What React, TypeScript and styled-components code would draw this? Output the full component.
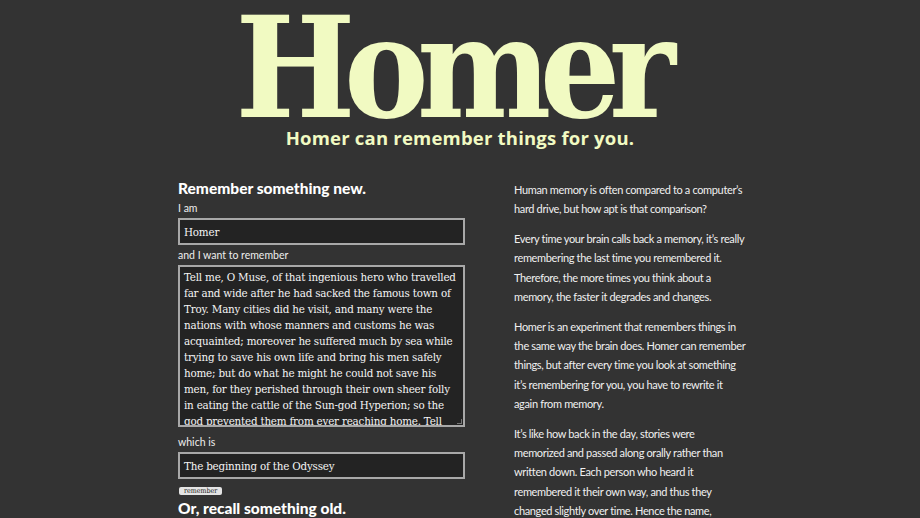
import React from "react";
import styled, { createGlobalStyle } from "styled-components";

const Global = createGlobalStyle`
  html, body { margin: 0; padding: 0; background: #333333; }
  body { font-family: Lato, "Open Sans", sans-serif; color: #f2f2f2; overflow: hidden; }
`;

const Page = styled.div`
  width: 920px;
  height: 518px;
  overflow: hidden;
  display: flex;
  flex-direction: column;
  align-items: center;
`;

const Title = styled.h1`
  margin: 5px 0 0;
  font-family: "DejaVu Serif Condensed", "DejaVu Serif", serif;
  font-weight: bold;
  font-size: 141px;
  line-height: 126px;
  height: 121px;
  letter-spacing: -11.5px;
  padding-right: 20px;
  color: #f1fac2;
`;

const Tagline = styled.h2`
  margin: 0;
  font-family: "Open Sans", sans-serif;
  font-weight: 700;
  font-size: 18.5px;
  line-height: 24px;
  letter-spacing: 0.2px;
  color: #f1fac2;
`;

const Columns = styled.div`
  margin-top: 28px;
  width: 564px;
  display: grid;
  grid-template-columns: 287px 1fr;
  column-gap: 49px;
`;

const Form = styled.div`
  display: flex;
  flex-direction: column;
`;

const Heading = styled.h3`
  margin: 0;
  font-family: Lato, sans-serif;
  font-weight: 900;
  font-size: 15.5px;
  line-height: 20px;
  color: #ffffff;
`;

const Label = styled.label`
  font-family: Lato, sans-serif;
  font-size: 10.5px;
  line-height: 14px;
  margin: 3px 0 3px;
  color: #eeeeee;
`;

const Field = styled.div<{ $h: number; $mb?: number }>`
  box-sizing: border-box;
  height: ${(p) => p.$h}px;
  border: 2px solid #a8a8a8;
  background: #232323;
  padding: ${(p) => (p.$h > 40 ? "2px 4px" : "0 4px")};
  display: ${(p) => (p.$h > 40 ? "block" : "flex")};
  align-items: center;
  font-family: "DejaVu Serif Condensed", "DejaVu Serif", serif;
  font-size: 11.5px;
  line-height: 16px;
  letter-spacing: -0.2px;
  color: #f4f4f4;
  overflow: hidden;
  white-space: nowrap;
  margin-bottom: ${(p) => p.$mb ?? 0}px;
  position: relative;
`;

const Line = styled.span`
  display: block;
`;

const Grip = styled.span`
  position: absolute;
  right: 1px;
  bottom: 1px;
  width: 4px;
  height: 4px;
  border-right: 1px solid #777;
  border-bottom: 1px solid #777;
`;

const Button = styled.button`
  align-self: flex-start;
  margin: 8px 0 3px 1px;
  padding: 0 5px;
  height: 8px;
  border: none;
  border-radius: 2px;
  background: #e4e4e4;
  color: #222;
  font-family: "DejaVu Serif Condensed", "DejaVu Serif", serif;
  font-size: 7px;
  line-height: 8px;
`;

const About = styled.div`
  padding-top: 2px;
  font-family: Lato, sans-serif;
  font-size: 11px;
  line-height: 19.3px;
  letter-spacing: -0.35px;
  color: #f0f0f0;
  white-space: nowrap;
`;

const Para = styled.p`
  margin: 0 0 10.5px;
`;

const story = [
  "Tell me, O Muse, of that ingenious hero who travelled",
  "far and wide after he had sacked the famous town of",
  "Troy. Many cities did he visit, and many were the",
  "nations with whose manners and customs he was",
  "acquainted; moreover he suffered much by sea while",
  "trying to save his own life and bring his men safely",
  "home; but do what he might he could not save his",
  "men, for they perished through their own sheer folly",
  "in eating the cattle of the Sun-god Hyperion; so the",
  "god prevented them from ever reaching home. Tell",
  "me, too, about all these things, O daughter of Jove,",
];

const paras = [
  ["Human memory is often compared to a computer’s", "hard drive, but how apt is that comparison?"],
  [
    "Every time your brain calls back a memory, it’s really",
    "remembering the last time you remembered it.",
    "Therefore, the more times you think about a",
    "memory, the faster it degrades and changes.",
  ],
  [
    "Homer is an experiment that remembers things in",
    "the same way the brain does. Homer can remember",
    "things, but after every time you look at something",
    "it’s remembering for you, you have to rewrite it",
    "again from memory.",
  ],
  [
    "It’s like how back in the day, stories were",
    "memorized and passed along orally rather than",
    "written down. Each person who heard it",
    "remembered it their own way, and thus they",
    "changed slightly over time. Hence the name,",
    "Homer.",
  ],
];

export default function App() {
  return (
    <Page>
      <Global />
      <Title>Homer</Title>
      <Tagline>Homer can remember things for you.</Tagline>
      <Columns>
        <Form>
          <Heading>Remember something new.</Heading>
          <Label>I am</Label>
          <Field $h={27} $mb={0}>Homer</Field>
          <Label>and I want to remember</Label>
          <Field $h={162} $mb={5}>
            {story.map((l, i) => (
              <Line key={i}>{l}</Line>
            ))}
            <Grip />
          </Field>
          <Label>which is</Label>
          <Field $h={27}>The beginning of the Odyssey</Field>
          <Button>remember</Button>
          <Heading>Or, recall something old.</Heading>
        </Form>
        <About>
          {paras.map((p, i) => (
            <Para key={i}>
              {p.map((l, j) => (
                <Line key={j}>{l}</Line>
              ))}
            </Para>
          ))}
        </About>
      </Columns>
    </Page>
  );
}
